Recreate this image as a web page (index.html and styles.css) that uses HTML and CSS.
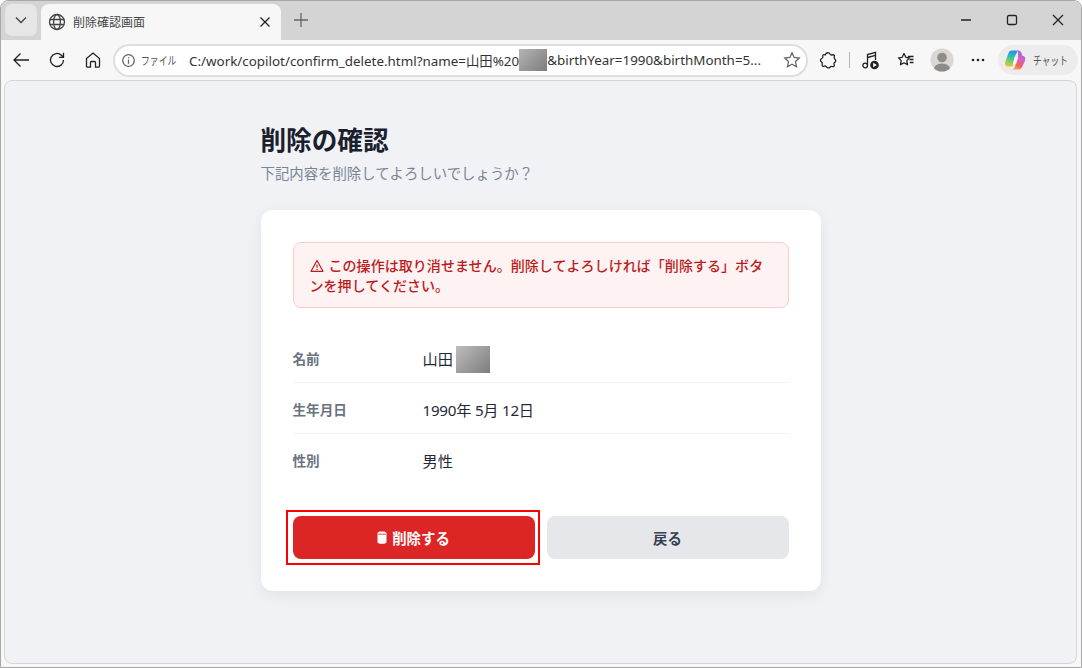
FILE: index.html
```html
<!DOCTYPE html>
<html lang="ja">
<head>
<meta charset="utf-8">
<title>削除確認画面</title>
<link rel="stylesheet" href="styles.css">
</head>
<body>
<div class="window">
  <div class="tabstrip">
    <div class="tabmenu">
      <svg width="14" height="14" viewBox="0 0 14 14"><path d="M2 4.500 7 9.500 12 4.500" class="ln"/></svg>
    </div>
    <div class="tab">
      <svg class="globe" width="18" height="18" viewBox="0 0 18 18"><circle cx="9" cy="9" r="7.500" class="ln"/><ellipse cx="9" cy="9" rx="3.400" ry="7.500" class="ln"/><path d="M1.800 6.500H16.200M1.800 11.500H16.200" class="ln"/></svg>
      <span class="tabtitle">削除確認画面</span>
      <svg class="tabclose" width="12" height="12" viewBox="0 0 12 12"><path d="M1.500 1.500 10.500 10.500M10.500 1.500 1.500 10.500" class="ln dark"/></svg>
    </div>
    <div class="newtab">
      <svg width="16" height="16" viewBox="0 0 16 16"><path d="M8 1V15M1 8H15" class="ln grey"/></svg>
    </div>
    <div class="winctl">
      <div class="winbtn"><svg width="12" height="12" viewBox="0 0 12 12"><path d="M1 6H11" class="ln dark"/></svg></div>
      <div class="winbtn"><svg width="12" height="12" viewBox="0 0 12 12"><rect x="1.500" y="1.500" width="9" height="9" rx="1.500" class="ln dark"/></svg></div>
      <div class="winbtn"><svg width="12" height="12" viewBox="0 0 12 12"><path d="M1 1 11 11M11 1 1 11" class="ln dark"/></svg></div>
    </div>
  </div>

  <div class="toolbar">
    <div class="tbtn"><svg width="18" height="18" viewBox="0 0 18 18"><path d="M17 9H2M8.500 2.500 2 9 8.500 15.500" class="ln dark"/></svg></div>
    <div class="tbtn"><svg width="18" height="18" viewBox="0 0 18 18"><path d="M15.500 9A6.500 6.500 0 1 1 13.400 4.200L15.500 6.300M15.500 1.800V6.300H11" class="ln dark"/></svg></div>
    <div class="tbtn"><svg width="18" height="18" viewBox="0 0 18 18"><path d="M2.500 7.500 9 2l6.500 5.500V15a1.200 1.200 0 0 1-1.200 1.200H11.500V11.500a1 1 0 0 0-1-1h-3a1 1 0 0 0-1 1v4.700H3.700A1.200 1.200 0 0 1 2.500 15Z" class="ln dark"/></svg></div>
    <div class="address">
      <svg class="infoicon" width="13" height="13" viewBox="0 0 13 13"><circle cx="6.500" cy="6.500" r="5.800" class="ln grey"/><path d="M6.500 5.800V9.800M6.500 3.200V4.400" class="ln grey"/></svg>
      <span class="scheme"><span class="scheme-text">ファイル</span></span>
      <span class="url">C:/work/copilot/confirm_delete.html?name=山田%20<span class="mask url-mask"></span>&amp;birthYear=1990&amp;birthMonth=5...</span>
      <svg class="star" width="18" height="18" viewBox="0 0 18 18"><path d="M9 1.800 11.200 6.500 16.300 7.100 12.500 10.600 13.500 15.700 9 13.200 4.500 15.700 5.500 10.600 1.700 7.100 6.800 6.500Z" class="ln grey"/></svg>
    </div>
    <div class="tbtn ext"><svg width="18" height="18" viewBox="0 0 18 18"><path d="M6.500 3.500C7 1.500 10 1 11 3 11.500 4 12.500 4.200 13.500 3.800 15 3.500 15.800 4.500 15.300 6 15 7 15.300 7.800 16 8.300 17.200 9.300 16.800 11 15.500 11.500 14.800 11.800 14.800 12.800 15.200 13.600 15.700 15 14.700 16 13.300 15.500 12.300 15.200 11.500 15.500 11 16.200 10 17.200 8 17 7.500 15.800 7.200 15 6.300 14.800 5.300 15.200 3.800 15.600 2.800 14.800 3.200 13.300 3.500 12.300 3.200 11.600 2.500 11 1 10 1.200 8 2.800 7.500 3.800 7.200 4 6.500 3.800 5.500 3.500 4.200 4.500 3.300 5.800 3.800 6.100 3.900 6.400 3.800 6.500 3.500Z" class="ln dark round"/></svg></div>
    <div class="tsep"></div>
    <div class="tbtn"><svg width="20" height="20" viewBox="0 0 20 20"><path d="M7.500 15V4.500L15.500 2.300V10" class="ln dark"/><circle cx="5.200" cy="15.500" r="2.300" class="ln dark"/><path d="M7.500 7.500 15.500 5.300" class="ln dark"/><circle cx="14.500" cy="15" r="4.300" class="solid"/><path d="M13.200 12.800V17.200L16.800 15Z" class="play"/></svg></div>
    <div class="tbtn"><svg width="18" height="18" viewBox="0 0 18 18"><path d="M7 2.500 8.800 6.300 12.500 6.800 9.800 9.600 10.500 13.800 7 11.800 3.500 13.800 4.200 9.600 1.500 6.800 5.200 6.300Z" class="ln dark round"/><path d="M10.800 5.500H16.500M12.500 8.500H16.500M12.800 11.500H16.500" class="ln dark"/></svg></div>
    <div class="tbtn">
      <svg width="24" height="24" viewBox="0 0 24 24"><defs><clipPath id="avatar"><circle cx="12" cy="12" r="11.500"/></clipPath></defs><circle cx="12" cy="12" r="11.500" class="avbg"/><g clip-path="url(#avatar)"><circle cx="12" cy="9.500" r="4.800" class="avfg"/><ellipse cx="12" cy="21" rx="8" ry="5.500" class="avfg"/></g></svg>
    </div>
    <div class="tbtn"><svg width="14" height="4" viewBox="0 0 14 4"><circle cx="2" cy="2" r="1.300" class="solid"/><circle cx="7" cy="2" r="1.300" class="solid"/><circle cx="12" cy="2" r="1.300" class="solid"/></svg></div>
    <div class="chat">
      <svg width="22" height="22" viewBox="0 0 22 22">
        <defs>
          <linearGradient id="cpA" x1=".6" y1="0" x2=".3" y2="1"><stop offset="0" stop-color="#2a8fe0"/><stop offset=".4" stop-color="#2cc0b8"/><stop offset=".75" stop-color="#8fd14f"/><stop offset="1" stop-color="#f5c02c"/></linearGradient>
          <linearGradient id="cpB" x1=".7" y1="0" x2=".35" y2="1"><stop offset="0" stop-color="#9a6be8"/><stop offset=".45" stop-color="#d85fc4"/><stop offset=".75" stop-color="#f0605f"/><stop offset="1" stop-color="#f9a03c"/></linearGradient>
        </defs>
        <path d="M7.500 1.500H14L10.500 8 8.500 17.500H4C1.500 17.500 .5 15.500 1.200 13L4.500 4C5 2.500 6 1.500 7.500 1.500Z" fill="url(#cpA)"/>
        <path d="M14 1.500C16 1.500 17 2.500 17.500 4L18.500 7H19.500C21.500 8 21.500 10 21 12L18 18C17 20 15.500 20.500 14 20.500H7.500C9.500 20.500 10.500 19 11 17.500L14 8Z" fill="url(#cpB)"/>
        <path d="M10.500 8.500H14.500L12.300 15H8.800Z" class="cp-core"/>
      </svg>
      <span class="chatlabel">チャット</span>
    </div>
  </div>

  <div class="frame">
    <main class="page">
      <header class="head">
        <h1 class="title">削除の確認</h1>
        <p class="subtitle">下記内容を削除してよろしいでしょうか？</p>
      </header>
      <section class="card">
        <div class="alert">
          <svg class="warn" width="14" height="14" viewBox="0 0 14 14"><path d="M7 1.500 13 12.300H1Z" class="ln warnline"/><path d="M7 5.500V8.800M7 10V11" class="ln warnline"/></svg>この操作は取り消せません。削除してよろしければ「削除する」ボタンを押してください。
        </div>
        <dl class="details">
          <div class="row"><dt class="label">名前</dt><dd class="value">山田<span class="mask name-mask"></span></dd></div>
          <div class="row"><dt class="label">生年月日</dt><dd class="value date">1990年 5月 12日</dd></div>
          <div class="row last"><dt class="label">性別</dt><dd class="value">男性</dd></div>
        </dl>
        <div class="actions">
          <button class="btn danger" type="button">
            <svg width="10" height="13" viewBox="0 0 10 13"><path d="M.5 2.500C.5 1 2 .5 5 .5S9.500 1 9.500 2.500V11C9.500 12 8.500 12.800 5 12.800S.5 12 .5 11Z" class="trash"/><path d="M1 3.200H9" class="trashline"/></svg>
            削除する
          </button>
          <button class="btn back" type="button">戻る</button>
        </div>
      </section>
    </main>
  </div>
</div>
</body>
</html>
```

FILE: styles.css
```css
* { box-sizing: border-box; }
html, body { margin: 0; height: 100%; }
body {
  background: #fff;
  font-family: "Noto Sans", "Noto Sans CJK JP", sans-serif;
  overflow: hidden;
}
svg { display: block; flex: none; }
.ln { fill: none; stroke: #444; stroke-width: 1.3; }
.ln.dark { stroke: #222; }
.ln.grey { stroke: #666; }
.ln.round { stroke-linejoin: round; }
.solid { fill: #222; }
.play { fill: #fff; }
.avbg { fill: #d9d6d3; }
.avfg { fill: #8f8b88; }
.cp-core { fill: #fff; fill-opacity: .55; }

.window {
  width: 1082px;
  height: 668px;
  display: flex;
  flex-direction: column;
  background: #f7f7f7;
  border: 1px solid #a8a8a8;
  border-radius: 8px 8px 0 0;
  overflow: hidden;
}

.tabstrip {
  height: 39px;
  flex: none;
  display: flex;
  align-items: flex-start;
  background: #d4d4d4;
  padding: 3px 0 0 4px;
}
.tabmenu {
  width: 32px;
  height: 32px;
  background: #e6e6e6;
  border-radius: 7px;
  display: flex;
  align-items: center;
  justify-content: center;
}
.tab {
  width: 240px;
  height: 36px;
  margin-left: 4px;
  background: #f7f7f7;
  border-radius: 8px 8px 0 0;
  display: flex;
  align-items: center;
  padding: 0 10px 0 7px;
}
.globe { margin-right: 7px; }
.tabtitle { flex: 1; font-size: 12px; color: #444; }
.newtab { width: 40px; height: 32px; display: flex; align-items: center; justify-content: center; }
.winctl { margin-left: auto; display: flex; }
.winbtn { width: 46px; height: 32px; display: flex; align-items: center; justify-content: center; }

.toolbar {
  height: 40px;
  flex: none;
  display: flex;
  align-items: center;
  padding: 0 4px 0 2px;
}
.tbtn { width: 36px; height: 36px; display: flex; align-items: center; justify-content: center; flex: none; }
.ext { margin-left: 2px; }
.tsep { width: 1px; height: 16px; background: #b5b5b5; margin: 0 2px 0 3px; flex: none; }
.address {
  width: 695px;
  height: 33px;
  margin-left: 2px;
  flex: none;
  display: flex;
  align-items: center;
  background: #fff;
  border: 2px solid #dedede;
  border-radius: 17px;
  padding: 0 5px 0 7px;
}
.infoicon { margin-right: 6px; }
.scheme { font-size: 11.500px; color: #555; width: 48px; flex: none; white-space: nowrap; }
.scheme-text { display: inline-block; transform: scaleX(.77); transform-origin: left center; }
.url { flex: 1; font-size: 13.400px; color: #333; white-space: nowrap; overflow: hidden; display: flex; align-items: center; }
.star { margin-left: 8px; }
.mask { display: inline-block; flex: none; }
.url-mask {
  width: 28px;
  height: 22px;
  background: linear-gradient(135deg, #b4b4b4, #7d7d7d);
}
.chat {
  margin-left: 2px;
  width: 80px;
  height: 30px;
  flex: none;
  background: #ececec;
  border-radius: 15px;
  display: flex;
  align-items: center;
  padding-left: 6px;
  gap: 7px;
}
.chatlabel { display: inline-block; font-size: 11.500px; color: #555; white-space: nowrap; transform: scaleX(.76); transform-origin: left center; }

.frame {
  flex: 1;
  min-height: 0;
  margin: 0 4px 3px 3px;
  background: #f0f2f6;
  border: 1px solid #d6d6d6;
  border-radius: 8px;
}
.page {
  width: 560px;
  margin: 0 auto;
  padding-top: 41px;
}
.head { margin-bottom: 25px; }
.title {
  margin: 0;
  font-size: 25.600px;
  line-height: 38px;
  font-weight: 700;
  color: #1a202c;
}
.subtitle {
  margin: 3px 0 0;
  font-size: 14.400px;
  line-height: 22px;
  color: #7a8594;
}
.card {
  background: #fff;
  border-radius: 12px;
  padding: 32px;
  box-shadow: 0 4px 16px rgba(0, 0, 0, .07);
}
.alert {
  background: #fef2f2;
  border: 1px solid #fecaca;
  border-radius: 8px;
  padding: 13px 16px 11px;
  color: #b91c1c;
  font-size: 14px;
  letter-spacing: .05px;
  line-height: 20px;
  font-weight: 500;
}
.warn { display: inline-block; vertical-align: -2px; margin-right: 5px; }
.warnline { stroke: #b91c1c; stroke-width: 1.200; stroke-linejoin: round; }
.details { margin: 24px 0 32px; }
.row {
  height: 51px;
  display: flex;
  align-items: center;
  padding-top: 2px;
  border-bottom: 1px solid #f0f1f3;
}
.row.last { height: 50px; border-bottom: 0; }
.label { width: 130px; flex: none; font-size: 13.600px; font-weight: 700; color: #6b7280; }
.value { margin: 0; font-size: 15.200px; color: #1f2937; display: flex; align-items: center; white-space: pre; }
.date { letter-spacing: -.25px; }
.name-mask {
  width: 34px;
  height: 27px;
  margin: 2px 0 0 3px;
  background: linear-gradient(135deg, #bdbdbd, #7d7d7d);
}
.actions { display: flex; gap: 12px; }
.btn {
  flex: 1;
  height: 43px;
  border: 0;
  border-radius: 8px;
  font-family: inherit;
  font-size: 14.400px;
  font-weight: 700;
  display: flex;
  align-items: center;
  justify-content: center;
}
.danger { background: #dc2626; color: #fff; gap: 5px; position: relative; }
.danger::after {
  content: "";
  position: absolute;
  top: -6px;
  bottom: -6px;
  left: -7px;
  right: -5px;
  border: 2px solid #f00;
}
.back { background: #e5e7eb; color: #374151; }
.trash { fill: #fff; }
.trashline { stroke: #dc2626; stroke-width: .8; fill: none; }
```
